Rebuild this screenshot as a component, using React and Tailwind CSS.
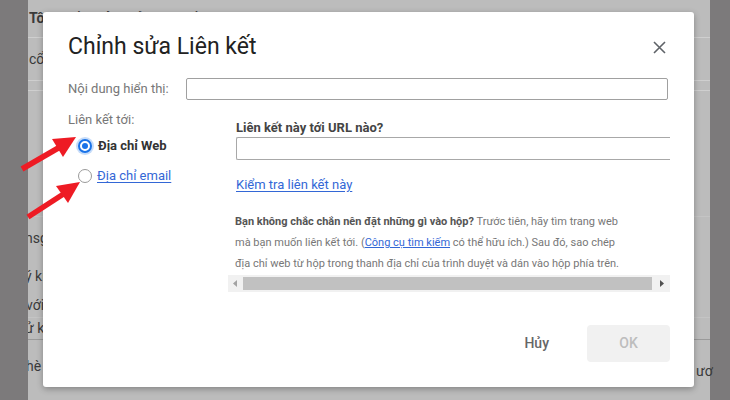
import React from "react";

function Radio({ checked }) {
  return checked ? (
    <span className="w-[14px] h-[14px] rounded-full border-2 border-[#1a73e8] flex items-center justify-center shadow-[0_0_0_2px_rgba(26,115,232,0.25)] bg-white">
      <span className="w-[6px] h-[6px] rounded-full bg-[#1a73e8]" />
    </span>
  ) : (
    <span className="w-[14px] h-[14px] rounded-full border-[1.5px] border-[#9a9a9a] bg-white" />
  );
}

export default function App() {
  return (
    <div className="relative w-[730px] h-[400px] overflow-hidden flex font-['Roboto',sans-serif]">
      <div className="w-[28px] h-full bg-[#7c7a7b]" />
      <div className="flex-1 h-full bg-[#bcbcbc] overflow-hidden flex flex-col text-[#3a3a3a] text-[14px]">
        <div className="h-[38px] border-b border-[#cfcfcf] flex items-start pt-[8px] pl-[1px] font-bold">Tôi muốn chỉnh sửa liên kết đã có</div>
        <div className="h-[43px] border-b border-[#cfcfcf] flex items-center pl-[1px]">cổ</div>
        <div className="h-[10px] border-b border-[#cfcfcf]" />
        <div className="h-[126px] border-b border-[#c4c4c4]" />
        <div className="h-[42px] flex items-center -ml-[3px]">nsg</div>
        <div className="h-[34px] flex items-center -ml-[3px]">ý kiến</div>
        <div className="h-[25px] flex items-center -ml-[2px] border-b border-[#c4c4c4]">với</div>
        <div className="h-[22px] flex items-center -ml-[3px] border-b border-[#9a9a9a]">ử k</div>
        <div className="h-[52px] flex items-center -ml-[2px]">hè</div>
      </div>
      <div className="w-[20px] h-full bg-[#7c7a7b]" />

      {/* faint right-side text */}
      <div className="absolute left-[696px] top-[361px] text-[14px] text-[#3a3a3a] font-['Roboto',sans-serif]">ươ</div>

      {/* Dialog */}
      <div className="absolute left-[43px] top-[12px] w-[651px] h-[375px] bg-white rounded-[3px] shadow-[0_2px_6px_rgba(0,0,0,0.3)] flex flex-col pl-[25px] pr-[24px]">
        <div className="flex items-start justify-between pt-[21px] h-[66px]">
          <div className="text-[23px] leading-[27px] text-[#222]">Chỉnh sửa Liên kết</div>
          <svg width="13" height="13" viewBox="0 0 13 13" className="mt-[8px] mr-[4px]">
            <path d="M1 1L12 12M12 1L1 12" stroke="#5f6368" strokeWidth="1.6" />
          </svg>
        </div>
        <div className="flex items-center h-[22px]">
          <div className="text-[13px] text-[#777] w-[118px]">Nội dung hiển thị:</div>
          <div className="flex-1 h-[22px] border border-[#a0a0a0] rounded-[2px] mr-[2px]" />
        </div>
        <div className="flex mt-[12px]">
          <div className="w-[160px] flex flex-col">
            <div className="text-[13px] text-[#777] h-[16px] leading-[16px]">Liên kết tới:</div>
            <div className="flex items-center gap-[6px] mt-[10px] ml-[10px] h-[16px]">
              <Radio checked />
              <span className="text-[13px] font-bold text-[#333]">Địa chỉ Web</span>
            </div>
            <div className="flex items-center gap-[5px] mt-[14px] ml-[10px] h-[16px]">
              <Radio />
              <span className="text-[13px] text-[#3367d6] underline underline-offset-2">Địa chỉ email</span>
            </div>
          </div>
          <div className="flex-1 flex flex-col">
            <div className="pl-[8px] text-[13px] font-bold text-[#444] h-[16px] leading-[16px] mt-[8px]">Liên kết này tới URL nào?</div>
            <div className="ml-[8px] mt-[1px] h-[23px] border-t border-b border-l border-[#a8a8a8] rounded-l-[2px]" />
            <div className="pl-[8px] mt-[17px] text-[13px] text-[#3367d6] underline underline-offset-2 leading-[16px]">Kiểm tra liên kết này</div>
            <div className="pl-[7px] mt-[18px] text-[11px] leading-[21px] text-[#777] whitespace-nowrap">
              <div><span className="font-bold text-[#555]">Bạn không chắc chắn nên đặt những gì vào hộp?</span> Trước tiên, hãy tìm trang web</div>
              <div>mà bạn muốn liên kết tới. (<span className="text-[#3367d6] underline">Công cụ tìm kiếm</span> có thể hữu ích.) Sau đó, sao chép</div>
              <div>địa chỉ web từ hộp trong thanh địa chỉ của trình duyệt và dán vào hộp phía trên.</div>
            </div>
            <div className="h-[17px] bg-[#f1f1f1] flex items-center mt-[1px]">
              <div className="w-[15px] flex items-center justify-center">
                <svg width="5" height="7" viewBox="0 0 5 7"><path d="M4 0L0 3.5L4 7Z" fill="#a3a3a3" /></svg>
              </div>
              <div className="flex-1 h-[13px] bg-[#c1c1c1]" />
              <div className="w-[18px] flex items-center justify-center">
                <svg width="5" height="7" viewBox="0 0 5 7"><path d="M1 0L5 3.5L1 7Z" fill="#505050" /></svg>
              </div>
            </div>
          </div>
        </div>
        <div className="flex-1" />
        <div className="flex items-center justify-end mb-[25px] gap-[38px]">
          <div className="text-[14px] font-medium text-[#666]">Hủy</div>
          <div className="w-[83px] h-[37px] rounded-[4px] bg-[#f1f1f1] flex items-center justify-center text-[14px] font-medium text-[#bdbdbd]">OK</div>
        </div>
      </div>

      {/* red arrows */}
      <svg className="absolute inset-0 pointer-events-none" width="730" height="400" viewBox="0 0 730 400">
        <line x1="22" y1="169" x2="60" y2="147" stroke="#ee1b24" strokeWidth="5.5" />
        <polygon points="76,137 63,157 52,139" fill="#ee1b24" />
        <line x1="28" y1="217" x2="65" y2="193" stroke="#ee1b24" strokeWidth="5.5" />
        <polygon points="80,182 68,203 56,186" fill="#ee1b24" />
      </svg>
    </div>
  );
}
